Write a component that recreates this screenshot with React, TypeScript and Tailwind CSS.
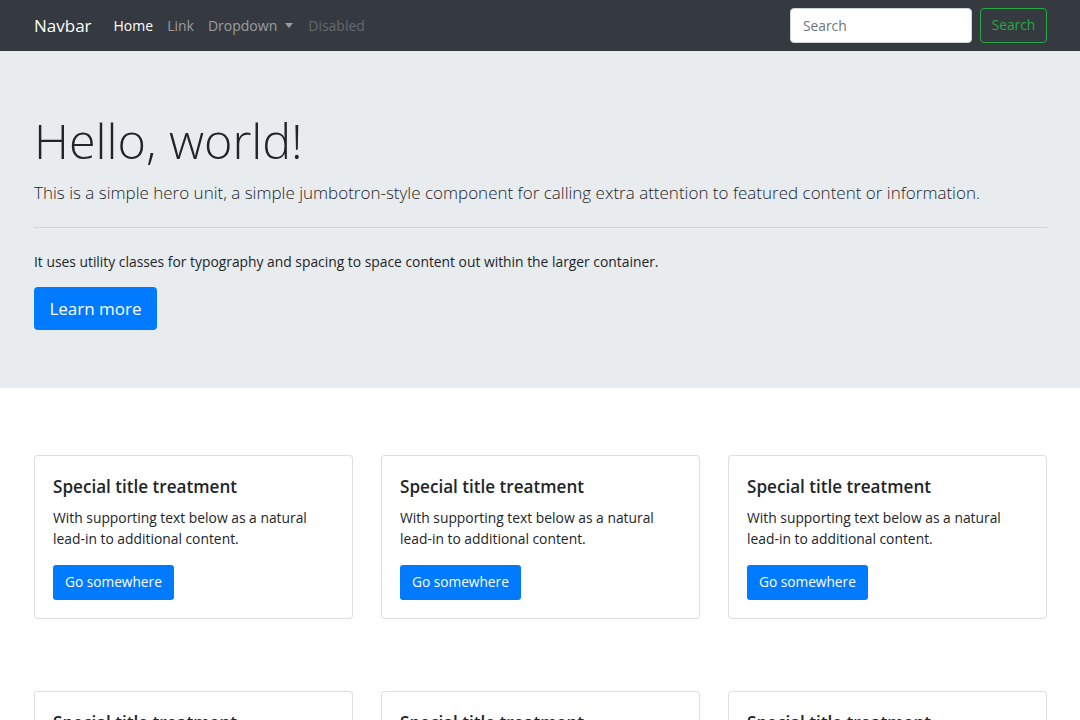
import React from "react";

const font = { fontFamily: '"Open Sans", "Noto Sans", sans-serif' };

function Card() {
  return (
    <div className="flex-1 rounded-[4px] border border-[rgba(0,0,0,0.125)] bg-white px-[18px] pb-[18px] pt-[19px]">
      <h5 className="mb-[8px] text-[17.1px] font-semibold leading-[24px] text-[#212529]">Special title treatment</h5>
      <p className="mb-[16px] text-[13.85px] leading-[21px] text-[#212529]">
        With supporting text below as a natural lead-in to additional content.
      </p>
      <button className="h-[35px] rounded-[3px] bg-[#007bff] px-[12px] text-[13.7px] text-white">Go somewhere</button>
    </div>
  );
}

export default function App() {
  return (
    <div style={font} className="min-h-screen bg-white text-[#212529]">
      <nav className="flex h-[51px] items-center bg-[#343a40] pl-[34px] pr-[33px]">
        <span className="mr-[22px] text-[17px] text-white">Navbar</span>
        <div className="flex items-center gap-[14px] text-[14px]">
          <span className="text-white">Home</span>
          <span className="text-[rgba(255,255,255,0.5)]">Link</span>
          <span className="flex items-center text-[rgba(255,255,255,0.5)]">
            Dropdown
            <span className="ml-[8px] inline-block h-0 w-0 border-x-[4px] border-t-[5px] border-x-transparent border-t-[rgba(255,255,255,0.5)]" />
          </span>
          <span className="ml-[1px] text-[rgba(255,255,255,0.25)]">Disabled</span>
        </div>
        <div className="ml-auto flex items-center gap-[8px]">
          <input
            placeholder="Search"
            className="h-[35px] w-[182px] rounded-[4px] border border-[#ced4da] bg-white px-[12px] text-[13.8px] text-[#495057] placeholder-[#6c757d] outline-none"
          />
          <button className="h-[35px] w-[67px] rounded-[4px] border border-[#28a745] text-[13.8px] text-[#28a745]">Search</button>
        </div>
      </nav>
      <section className="bg-[#e9ecef] pb-[58px] pl-[34px] pr-[33px] pt-[60px]">
        <h1 className="text-[48.5px] font-light leading-[58px] text-[#212529]">Hello, world!</h1>
        <p className="mt-[10px] text-[17px] font-light leading-[27px] text-[#212529]">
          This is a simple hero unit, a simple jumbotron-style component for calling extra attention to featured content or information.
        </p>
        <hr className="mb-[22px] mt-[21px] border-t border-[rgba(0,0,0,0.1)]" />
        <p className="mb-[13px] text-[13.85px] leading-[24px]">
          It uses utility classes for typography and spacing to space content out within the larger container.
        </p>
        <button className="h-[43px] w-[123px] rounded-[4px] bg-[#007bff] text-[17px] text-white">Learn more</button>
      </section>
      <div className="pl-[34px] pr-[33px] pt-[67px]">
        <div className="flex gap-[28px]">
          <Card />
          <Card />
          <Card />
        </div>
        <div className="mt-[72px] flex gap-[28px]">
          <Card />
          <Card />
          <Card />
        </div>
      </div>
    </div>
  );
}
